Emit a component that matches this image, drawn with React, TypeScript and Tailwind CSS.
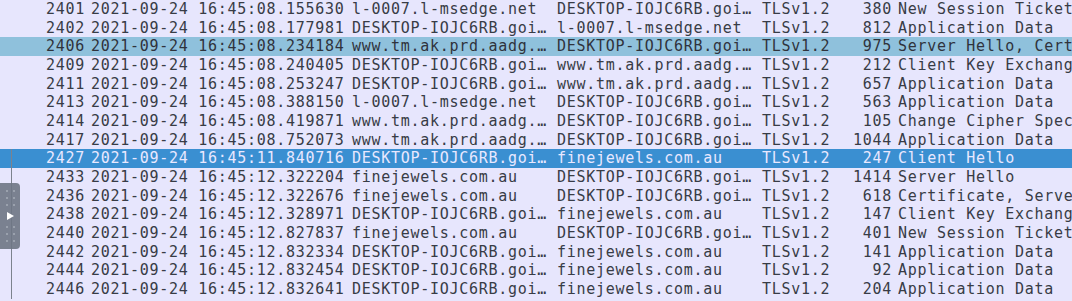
import type React from "react";

type Packet = {
  no: string;
  time: string;
  src: string;
  dst: string;
  proto: string;
  len: string;
  info: string;
};

const D = "DESKTOP-IOJC6RB.goi…";
const MS = "l-0007.l-msedge.net";
const TM = "www.tm.ak.prd.aadg.…";
const FJ = "finejewels.com.au";

const packets: Packet[] = [
  { no: "2401", time: "2021-09-24 16:45:08.155630", src: MS, dst: D, proto: "TLSv1.2", len: "380", info: "New Session Ticket" },
  { no: "2402", time: "2021-09-24 16:45:08.177981", src: D, dst: MS, proto: "TLSv1.2", len: "812", info: "Application Data" },
  { no: "2406", time: "2021-09-24 16:45:08.234184", src: TM, dst: D, proto: "TLSv1.2", len: "975", info: "Server Hello, Certificate" },
  { no: "2409", time: "2021-09-24 16:45:08.240405", src: D, dst: TM, proto: "TLSv1.2", len: "212", info: "Client Key Exchange" },
  { no: "2411", time: "2021-09-24 16:45:08.253247", src: D, dst: TM, proto: "TLSv1.2", len: "657", info: "Application Data" },
  { no: "2413", time: "2021-09-24 16:45:08.388150", src: MS, dst: D, proto: "TLSv1.2", len: "563", info: "Application Data" },
  { no: "2414", time: "2021-09-24 16:45:08.419871", src: TM, dst: D, proto: "TLSv1.2", len: "105", info: "Change Cipher Spec" },
  { no: "2417", time: "2021-09-24 16:45:08.752073", src: TM, dst: D, proto: "TLSv1.2", len: "1044", info: "Application Data" },
  { no: "2427", time: "2021-09-24 16:45:11.840716", src: D, dst: FJ, proto: "TLSv1.2", len: "247", info: "Client Hello" },
  { no: "2433", time: "2021-09-24 16:45:12.322204", src: FJ, dst: D, proto: "TLSv1.2", len: "1414", info: "Server Hello" },
  { no: "2436", time: "2021-09-24 16:45:12.322676", src: FJ, dst: D, proto: "TLSv1.2", len: "618", info: "Certificate, Server Hello Done" },
  { no: "2438", time: "2021-09-24 16:45:12.328971", src: D, dst: FJ, proto: "TLSv1.2", len: "147", info: "Client Key Exchange" },
  { no: "2440", time: "2021-09-24 16:45:12.827837", src: FJ, dst: D, proto: "TLSv1.2", len: "401", info: "New Session Ticket" },
  { no: "2442", time: "2021-09-24 16:45:12.832334", src: D, dst: FJ, proto: "TLSv1.2", len: "141", info: "Application Data" },
  { no: "2444", time: "2021-09-24 16:45:12.832454", src: D, dst: FJ, proto: "TLSv1.2", len: "92", info: "Application Data" },
  { no: "2446", time: "2021-09-24 16:45:12.832641", src: D, dst: FJ, proto: "TLSv1.2", len: "204", info: "Application Data" },
];

const SELECTED = "2427";
const MARKED = "2406";
// conversation line starts at the selected packet and runs down
const lineFrom = packets.findIndex((p) => p.no === SELECTED);

const Handle: React.FC = () => (
  <div className="absolute left-0 top-[183px] w-[20px] h-[66px] rounded-r-[4px] bg-[#6e7684]/90 flex flex-col items-center justify-center gap-[5px]">
    <div className="grid grid-cols-2 gap-x-[5px] gap-y-[5px]">
      {Array.from({ length: 6 }).map((_, i) => (
        <span key={i} className="w-[2px] h-[2px] bg-[#9aa1ad]" />
      ))}
    </div>
    <svg width="7" height="8" viewBox="0 0 7 8" className="my-[1px]">
      <path d="M0 0 L7 4 L0 8 Z" fill="#ffffff" />
    </svg>
    <div className="grid grid-cols-2 gap-x-[5px] gap-y-[5px]">
      {Array.from({ length: 6 }).map((_, i) => (
        <span key={i} className="w-[2px] h-[2px] bg-[#9aa1ad]" />
      ))}
    </div>
  </div>
);

export default function App() {
  return (
    <div
      className="relative w-[1072px] h-[301px] overflow-hidden bg-[#e7e6fd] text-[15px] leading-[18.67px] tracking-[0.72px] text-[#383c46]"
      style={{ fontFamily: '"DejaVu Sans Mono", "Liberation Mono", monospace' }}
    >
      {packets.map((p, i) => {
        const sel = p.no === SELECTED;
        const mark = p.no === MARKED;
        const rowCls = sel
          ? "bg-[#3a8fd1] text-[#e9e8ff]"
          : mark
            ? "bg-[#8fc1dc] text-[#2f333c]"
            : "";
        return (
          <div key={p.no} className={`flex h-[18.67px] whitespace-nowrap ${rowCls}`}>
            <div className="relative w-[91px] shrink-0 text-right pr-[6px]">
              {i >= lineFrom && (
                <span className="absolute left-[11px] top-0 bottom-0 w-px bg-[#7c828d]" />
              )}
              {p.no}
            </div>
            <div className="w-[261px] shrink-0">{p.time}</div>
            <div className="w-[205px] shrink-0">{p.src}</div>
            <div className="w-[205px] shrink-0">{p.dst}</div>
            <div className="w-[80px] shrink-0">{p.proto}</div>
            <div className="w-[56px] shrink-0 text-right pr-[6px]">{p.len}</div>
            <div className="flex-1 overflow-hidden">{p.info}</div>
          </div>
        );
      })}
      <Handle />
    </div>
  );
}
